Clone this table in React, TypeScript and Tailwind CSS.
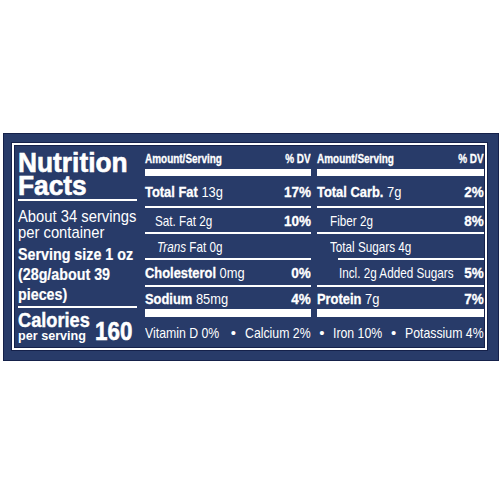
import React from "react";

type RowProps = {
  h: string;
  pl?: string;
  sx?: string;
  label: React.ReactNode;
  dv?: string;
  line?: string;
};

function Row({ h, pl = "", sx = "scale-x-[0.86]", label, dv, line }: RowProps) {
  return (
    <>
      <div className={`flex items-center ${h} ${pl}`}>
        <div className="flex min-w-0 flex-1">
          <span
            className={`inline-block origin-left whitespace-nowrap text-[15px] leading-[15px] [&_b]:[-webkit-text-stroke:0.3px_white] ${sx}`}
          >
            {label}
          </span>
        </div>
        {dv && (
          <span className="inline-block shrink-0 origin-right scale-x-[0.9] whitespace-nowrap text-[15px] leading-[15px] font-bold [-webkit-text-stroke:0.3px_white]">
            {dv}
          </span>
        )}
      </div>
      {line && <div className={line} />}
    </>
  );
}

function Header() {
  return (
    <>
      <div className="flex h-[24px] items-end justify-between pb-[4px] text-[12px] leading-[12px] font-bold">
        <span className="inline-block origin-left scale-x-[0.83] whitespace-nowrap [-webkit-text-stroke:0.3px_white]">
          Amount/Serving
        </span>
        <span className="inline-block origin-right scale-x-[0.83] whitespace-nowrap [-webkit-text-stroke:0.3px_white]">
          % DV
        </span>
      </div>
      <div className="h-[7px] bg-white" />
    </>
  );
}

const full = "h-[2px] bg-white";
const reg = "scale-x-[0.78]";

export default function App() {
  return (
    <div className="h-[500px] w-[500px] bg-white pl-[3px] pt-[133px] font-['Liberation_Sans',Arial,sans-serif] text-white">
      <div className="h-[228px] w-[496px] border border-[#15214a] bg-[#283b69] pb-[10px] pl-[8px] pr-[11px] pt-[9px]">
        <div className="flex h-[207px] w-[475px] border-2 border-white pl-[4px] shadow-[0_0_0_1px_#15214a,inset_0_0_0_1px_#15214a]">
          {/* left column */}
          <div className="flex w-[119px] flex-col">
            <div className="flex border-b-2 border-white pb-[2px] pt-[6px]">
              <span className="inline-block origin-left scale-x-[0.94] whitespace-nowrap text-[28px] leading-[23px] font-bold [-webkit-text-stroke:0.6px_white]">
                Nutrition
                <br />
                Facts
              </span>
            </div>
            <div className="mt-[8px] flex">
              <span className="inline-block origin-left scale-x-[0.87] whitespace-nowrap text-[17px] leading-[15.5px]">
                About 34 servings
                <br />
                per container
              </span>
            </div>
            <div className="mt-[5px] flex border-b-2 border-white pb-[1px]">
              <span className="inline-block origin-left scale-x-[0.84] whitespace-nowrap text-[17px] leading-[20px] font-bold [-webkit-text-stroke:0.2px_white]">
                Serving size 1 oz
                <br />
                (28g/about 39
                <br />
                pieces)
              </span>
            </div>
            <div className="flex items-end pr-[5px] pt-[3px]">
              <div className="flex min-w-0 flex-1 flex-col font-bold">
                <span className="inline-block origin-left scale-x-[0.91] whitespace-nowrap text-[20px] leading-[18px] [-webkit-text-stroke:0.4px_white]">
                  Calories
                </span>
                <span className="inline-block origin-left scale-x-[0.97] whitespace-nowrap text-[13px] leading-[13px]">
                  per serving
                </span>
              </div>
              <span className="inline-block shrink-0 origin-right scale-x-[0.86] whitespace-nowrap text-[26px] leading-[22px] font-bold [-webkit-text-stroke:0.6px_white]">
                160
              </span>
            </div>
          </div>

          {/* amounts */}
          <div className="ml-[8px] flex w-[339px] flex-col">
            <div className="grid grid-cols-[166px_167px] gap-x-[6px]">
              <div className="flex flex-col">
                <Header />
                <Row
                  h="h-[30px]"
                  label={
                    <>
                      <b>Total Fat</b> 13g
                    </>
                  }
                  dv="17%"
                  line={full}
                />
                <Row h="h-[24px]" pl="pl-[10px]" sx={reg} label="Sat. Fat 2g" dv="10%" line={full} />
                <Row
                  h="h-[24px]"
                  pl="pl-[12px]"
                  sx={reg}
                  label={
                    <>
                      <i>Trans</i> Fat 0g
                    </>
                  }
                  line={full}
                />
                <Row
                  h="h-[25px]"
                  label={
                    <>
                      <b>Cholesterol</b> 0mg
                    </>
                  }
                  dv="0%"
                  line={full}
                />
                <Row
                  h="h-[22px]"
                  label={
                    <>
                      <b>Sodium</b> 85mg
                    </>
                  }
                  dv="4%"
                />
                <div className="h-[8px] bg-white" />
              </div>
              <div className="flex flex-col">
                <Header />
                <Row
                  h="h-[30px]"
                  label={
                    <>
                      <b>Total Carb.</b> 7g
                    </>
                  }
                  dv="2%"
                  line={full}
                />
                <Row h="h-[24px]" pl="pl-[13px]" sx={reg} label="Fiber 2g" dv="8%" line={full} />
                <Row
                  h="h-[24px]"
                  pl="pl-[13px]"
                  sx={reg}
                  label="Total Sugars 4g"
                  line="ml-[21px] h-[2px] bg-white"
                />
                <Row h="h-[25px]" pl="pl-[22px]" sx={reg} label="Incl. 2g Added Sugars" dv="5%" line={full} />
                <Row
                  h="h-[22px]"
                  label={
                    <>
                      <b>Protein</b> 7g
                    </>
                  }
                  dv="7%"
                />
                <div className="h-[8px] bg-white" />
              </div>
            </div>

            <div className="flex h-[31px] items-center justify-between text-[15px] leading-[15px]">
              <span className="flex w-[77px] shrink-0">
                <span className="inline-block origin-left scale-x-[0.82] whitespace-nowrap">Vitamin D 0%</span>
              </span>
              <span>•</span>
              <span className="flex w-[66px] shrink-0">
                <span className="inline-block origin-left scale-x-[0.82] whitespace-nowrap">Calcium 2%</span>
              </span>
              <span>•</span>
              <span className="flex w-[49px] shrink-0">
                <span className="inline-block origin-left scale-x-[0.82] whitespace-nowrap">Iron 10%</span>
              </span>
              <span>•</span>
              <span className="flex w-[79px] shrink-0">
                <span className="inline-block origin-left scale-x-[0.82] whitespace-nowrap">Potassium 4%</span>
              </span>
            </div>
          </div>
        </div>
      </div>
    </div>
  );
}
